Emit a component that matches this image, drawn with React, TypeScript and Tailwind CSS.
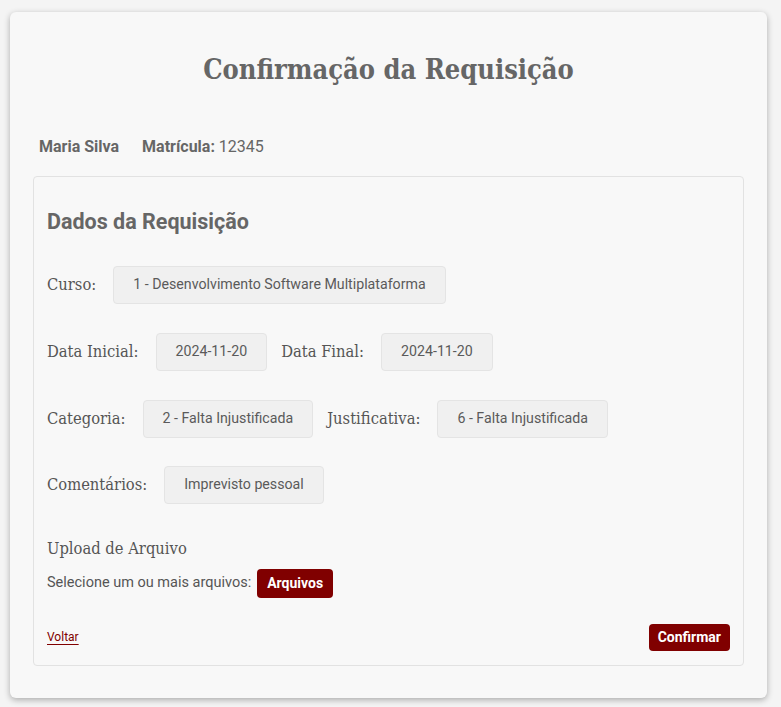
import React from 'react';

const serif = { fontFamily: '"DejaVu Serif Condensed", "DejaVu Serif", "Liberation Serif", serif' };

function Field({ label, value, className = '' }: { label: string; value: string; className?: string }) {
  return (
    <div className={`flex items-center ${className}`}>
      <span className="mr-[17px] text-[16.4px] font-light text-[#555]" style={serif}>
        {label}
      </span>
      <div className="flex h-[38px] items-center rounded border border-[#e4e4e4] bg-[#f0f0f0] px-[19px] text-[14.2px] text-[#5a5a5a]">
        {value}
      </div>
    </div>
  );
}

export default function App() {
  return (
    <div className="min-h-[707px] bg-[#f4f4f4] pt-[12px] pl-[10px]" style={{ fontFamily: 'Roboto, "Liberation Sans", sans-serif' }}>
      <div className="w-[757px] rounded-md bg-[#f8f8f8] px-[23px] pb-[32px] pt-[28px] shadow-[0_2px_6px_rgba(0,0,0,0.3)]">
        <h1 className="text-center text-[27px] font-bold leading-[60px] text-[#666]" style={serif}>
          Confirmação da Requisição
        </h1>

        <div className="mt-[35px] flex items-center gap-[23px] px-[6px] text-[16px] text-[#666]">
          <span className="font-bold">Maria Silva</span>
          <span>
            <span className="font-bold">Matrícula:</span> 12345
          </span>
        </div>

        <div className="mt-[17px] rounded border border-[#e2e2e2] px-[13px] pb-[14px] pt-[30px]">
          <h2 className="text-[21.5px] font-bold leading-[30px] text-[#666]">Dados da Requisição</h2>

          <Field className="mt-[29px]" label="Curso:" value="1 - Desenvolvimento Software Multiplataforma" />

          <div className="mt-[29px] flex items-center gap-[14px]">
            <Field label="Data Inicial:" value="2024-11-20" />
            <Field label="Data Final:" value="2024-11-20" />
          </div>

          <div className="mt-[29px] flex items-center gap-[14px]">
            <Field label="Categoria:" value="2 - Falta Injustificada" />
            <Field label="Justificativa:" value="6 - Falta Injustificada" />
          </div>

          <Field className="mt-[28px]" label="Comentários:" value="Imprevisto pessoal" />

          <div className="mt-[33px] text-[16.4px] font-light text-[#555]" style={serif}>
            Upload de Arquivo
          </div>
          <div className="mt-[7px] flex items-center gap-[6px] text-[14.5px] text-[#555]">
            <span>Selecione um ou mais arquivos:</span>
            <button className="h-[29px] rounded bg-[#800000] px-[10px] text-[14px] font-bold text-white">Arquivos</button>
          </div>

          <div className="mt-[26px] flex items-center justify-between">
            <a href="#" className="text-[12px] text-[#800000] underline underline-offset-[3px]">
              Voltar
            </a>
            <button className="h-[27px] rounded bg-[#800000] px-[9px] text-[14px] font-bold text-white">Confirmar</button>
          </div>
        </div>
      </div>
    </div>
  );
}
